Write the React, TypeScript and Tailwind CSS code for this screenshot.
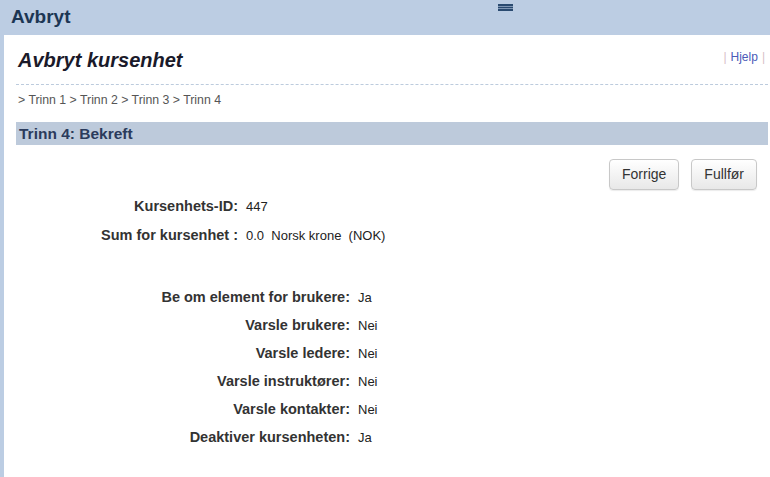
import React from 'react';

const font = { fontFamily: '"Liberation Sans", Arial, sans-serif' };

type Row = { label: string; value: React.ReactNode };

const summaryRows: Row[] = [
  { label: 'Kursenhets-ID:', value: '447' },
  {
    label: 'Sum for kursenhet :',
    value: (
      <>
        0.0&nbsp;&nbsp;Norsk krone&nbsp;&nbsp;(NOK)
      </>
    ),
  },
];

const optionRows: Row[] = [
  { label: 'Be om element for brukere:', value: 'Ja' },
  { label: 'Varsle brukere:', value: 'Nei' },
  { label: 'Varsle ledere:', value: 'Nei' },
  { label: 'Varsle instruktører:', value: 'Nei' },
  { label: 'Varsle kontakter:', value: 'Nei' },
  { label: 'Deaktiver kursenheten:', value: 'Ja' },
];

function FieldList({ rows, labelWidth, rowHeight }: { rows: Row[]; labelWidth: string; rowHeight: string }) {
  return (
    <div className="flex flex-col">
      {rows.map((r) => (
        <div key={r.label} className={`flex items-baseline ${rowHeight}`}>
          <div className={`${labelWidth} text-right text-[14.5px] font-bold text-[#333]`}>{r.label}</div>
          <div className="pl-[8px] text-[13px] text-[#222]">{r.value}</div>
        </div>
      ))}
    </div>
  );
}

function Button({ children }: { children: React.ReactNode }) {
  return (
    <button className="h-[31px] px-[12px] rounded-[4px] border border-[#c8c8c8] bg-gradient-to-b from-white to-[#e8e8e8] text-[14px] text-[#333] shadow-[0_1px_1px_rgba(0,0,0,0.08)]">
      {children}
    </button>
  );
}

export default function App() {
  return (
    <div className="w-full h-[477px] bg-[#bccde3] flex flex-col overflow-hidden" style={font}>
      {/* top bar */}
      <div className="relative h-[35px] shrink-0 flex items-center px-[11px]">
        <span className="text-[19px] font-bold text-[#1c3654]">Avbryt</span>
        <div className="absolute left-[498px] top-[4px] w-[15px] h-[7px] bg-[#2a4a70] flex flex-col justify-evenly">
          <div className="h-px bg-[#7f96b4]" />
          <div className="h-px bg-[#7f96b4]" />
        </div>
      </div>

      {/* page body */}
      <div className="flex-1 ml-[4px] bg-white pl-[12px] pr-[2px]">
        <div className="flex items-end justify-between pl-[2px] pr-[3px] pt-[11px] pb-[10px] border-b border-dashed border-[#bccbdd]">
          <h1 className="text-[20px] font-bold italic text-[#1a1a2a] leading-[28px]">Avbryt kursenhet</h1>
          <div className="text-[12px] mb-[8px]">
            <span className="text-[#d8c0c8]">|</span>
            <span className="text-[#4b5bb8] px-[4px]">Hjelp</span>
            <span className="text-[#d8c0c8]">|</span>
          </div>
        </div>

        <div className="pl-[2px] pt-[6px] text-[12.3px] text-[#555]">
          &gt; Trinn 1 &gt; Trinn 2 &gt; Trinn 3 &gt; Trinn 4
        </div>

        <div className="mt-[13px] h-[23px] bg-[#bdcadb] flex items-center px-[3px]">
          <span className="text-[15.5px] font-bold text-[#2b3b5c]">Trinn 4: Bekreft</span>
        </div>

        <div className="flex justify-end gap-[12px] pt-[14px] pr-[11px]">
          <Button>Forrige</Button>
          <Button>Fullfør</Button>
        </div>

        <div className="mt-[6px]">
          <FieldList rows={summaryRows} labelWidth="w-[222px]" rowHeight="h-[29px]" />
        </div>

        <div className="mt-[33px]">
          <FieldList rows={optionRows} labelWidth="w-[334px]" rowHeight="h-[28px]" />
        </div>
      </div>
    </div>
  );
}
